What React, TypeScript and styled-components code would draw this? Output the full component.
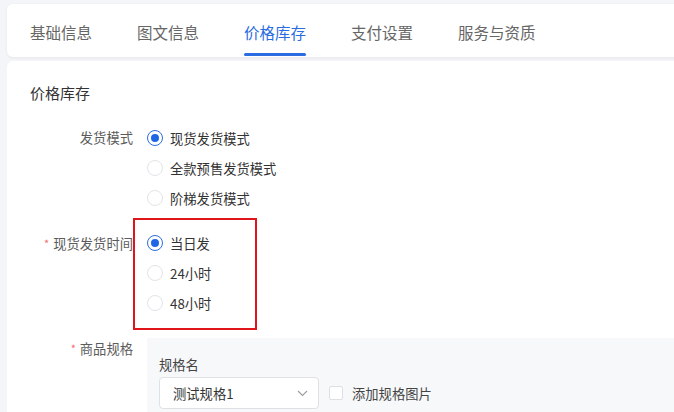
import React from "react";
import styled, { createGlobalStyle } from "styled-components";

const Global = createGlobalStyle`
  html, body { margin: 0; padding: 0; background: #f4f5f8; overflow: hidden; }
  body { font-family: "Noto Sans CJK SC", "Noto Sans", sans-serif; }
  * { box-sizing: border-box; }
`;

const Page = styled.div`
  width: 674px;
  height: 412px;
  padding: 4px 0 0 7px;
  display: flex;
  flex-direction: column;
  gap: 4px;
  overflow: hidden;
`;

const TabBar = styled.div`
  height: 53px;
  margin-right: -20px;
  background: #fff;
  border-radius: 6px;
  box-shadow: 0 1px 3px rgba(0, 0, 0, 0.06);
  display: flex;
  align-items: stretch;
  gap: 45px;
  padding: 3px 0 0 23px;
  flex-shrink: 0;
`;

const Tab = styled.div<{ $active?: boolean }>`
  position: relative;
  display: flex;
  align-items: center;
  font-size: 15.5px;
  color: ${(p) => (p.$active ? "#2b6de0" : "#666")};
  &::after {
    content: "";
    display: ${(p) => (p.$active ? "block" : "none")};
    position: absolute;
    left: 0;
    right: 0;
    bottom: 1px;
    height: 3px;
    border-radius: 2px;
    background: #2b6de0;
  }
`;

const Card = styled.div`
  flex: 1;
  margin-right: -20px;
  background: #fff;
  border-radius: 6px 6px 0 0;
  padding-top: 22px;
`;

const Title = styled.div`
  padding-left: 23px;
  font-size: 15px;
  line-height: 20px;
  color: #333;
  margin-bottom: 20px;
`;

const FormItem = styled.div<{ $mt?: number }>`
  display: grid;
  grid-template-columns: 126px 1fr;
  column-gap: 14px;
  margin-top: ${(p) => p.$mt ?? 0}px;
`;

const Label = styled.div<{ $lh?: number }>`
  text-align: right;
  font-size: 13.3px;
  line-height: ${(p) => p.$lh ?? 30}px;
  color: #5c5c5c;
  white-space: nowrap;
`;

const Star = styled.span`
  color: #f56c6c;
  font-size: 11px;
  margin-right: 4px;
  vertical-align: 1px;
`;

const RadioGroup = styled.div`
  position: relative;
  display: flex;
  flex-direction: column;
`;

const RadioRow = styled.div`
  height: 30px;
  display: flex;
  align-items: center;
  gap: 7px;
  font-size: 13.3px;
  color: #333;
`;

const Circle = styled.span<{ $checked?: boolean }>`
  width: 16px;
  height: 16px;
  border-radius: 50%;
  border: 1px solid ${(p) => (p.$checked ? "#2b6de0" : "#e3e4e8")};
  background: #fff;
  display: flex;
  align-items: center;
  justify-content: center;
  &::after {
    content: "";
    display: ${(p) => (p.$checked ? "block" : "none")};
    width: 8px;
    height: 8px;
    border-radius: 50%;
    background: #1f66e5;
  }
`;

const Highlight = styled.div`
  position: absolute;
  left: -14px;
  top: -10px;
  width: 124px;
  height: 112px;
  border: 2px solid #e0141b;
  pointer-events: none;
`;

const SpecPanel = styled.div`
  background: #f7f8fa;
  padding: 17px 12px 0;
  height: 80px;
`;

const SpecTitle = styled.div`
  font-size: 13.3px;
  line-height: 20px;
  color: #444;
  margin-bottom: 2px;
`;

const SpecLine = styled.div`
  display: flex;
  align-items: center;
`;

const Select = styled.div`
  width: 160px;
  height: 32px;
  background: #fff;
  border: 1px solid #dfe1e6;
  border-radius: 4px;
  display: flex;
  align-items: center;
  justify-content: space-between;
  padding: 0 10px 0 13px;
  font-size: 13.3px;
  color: #333;
`;

const Check = styled.span`
  width: 14px;
  height: 14px;
  margin: 0 9px 0 10px;
  border: 1px solid #dcdfe6;
  border-radius: 2px;
  background: #fff;
`;

const CheckText = styled.span`
  font-size: 13.3px;
  color: #444;
`;

const Radio = ({ label, checked }: { label: string; checked?: boolean }) => (
  <RadioRow>
    <Circle $checked={checked} />
    {label}
  </RadioRow>
);

export default function App() {
  const tabs = ["基础信息", "图文信息", "价格库存", "支付设置", "服务与资质"];
  return (
    <>
      <Global />
      <Page>
        <TabBar>
          {tabs.map((t) => (
            <Tab key={t} $active={t === "价格库存"}>
              {t}
            </Tab>
          ))}
        </TabBar>
        <Card>
          <Title>价格库存</Title>
          <FormItem>
            <Label>发货模式</Label>
            <RadioGroup>
              <Radio label="现货发货模式" checked />
              <Radio label="全款预售发货模式" />
              <Radio label="阶梯发货模式" />
            </RadioGroup>
          </FormItem>
          <FormItem $mt={15}>
            <Label>
              <Star>*</Star>现货发货时间
            </Label>
            <RadioGroup>
              <Radio label="当日发" checked />
              <Radio label="24小时" />
              <Radio label="48小时" />
              <Highlight />
            </RadioGroup>
          </FormItem>
          <FormItem $mt={20}>
            <Label $lh={20}>
              <Star>*</Star>商品规格
            </Label>
            <SpecPanel>
              <SpecTitle>规格名</SpecTitle>
              <SpecLine>
                <Select>
                  测试规格1
                  <svg width="11" height="7" viewBox="0 0 11 7" fill="none">
                    <path d="M1 1l4.5 4.5L10 1" stroke="#9a9ca3" strokeWidth="1.1" />
                  </svg>
                </Select>
                <Check />
                <CheckText>添加规格图片</CheckText>
              </SpecLine>
            </SpecPanel>
          </FormItem>
        </Card>
      </Page>
    </>
  );
}
